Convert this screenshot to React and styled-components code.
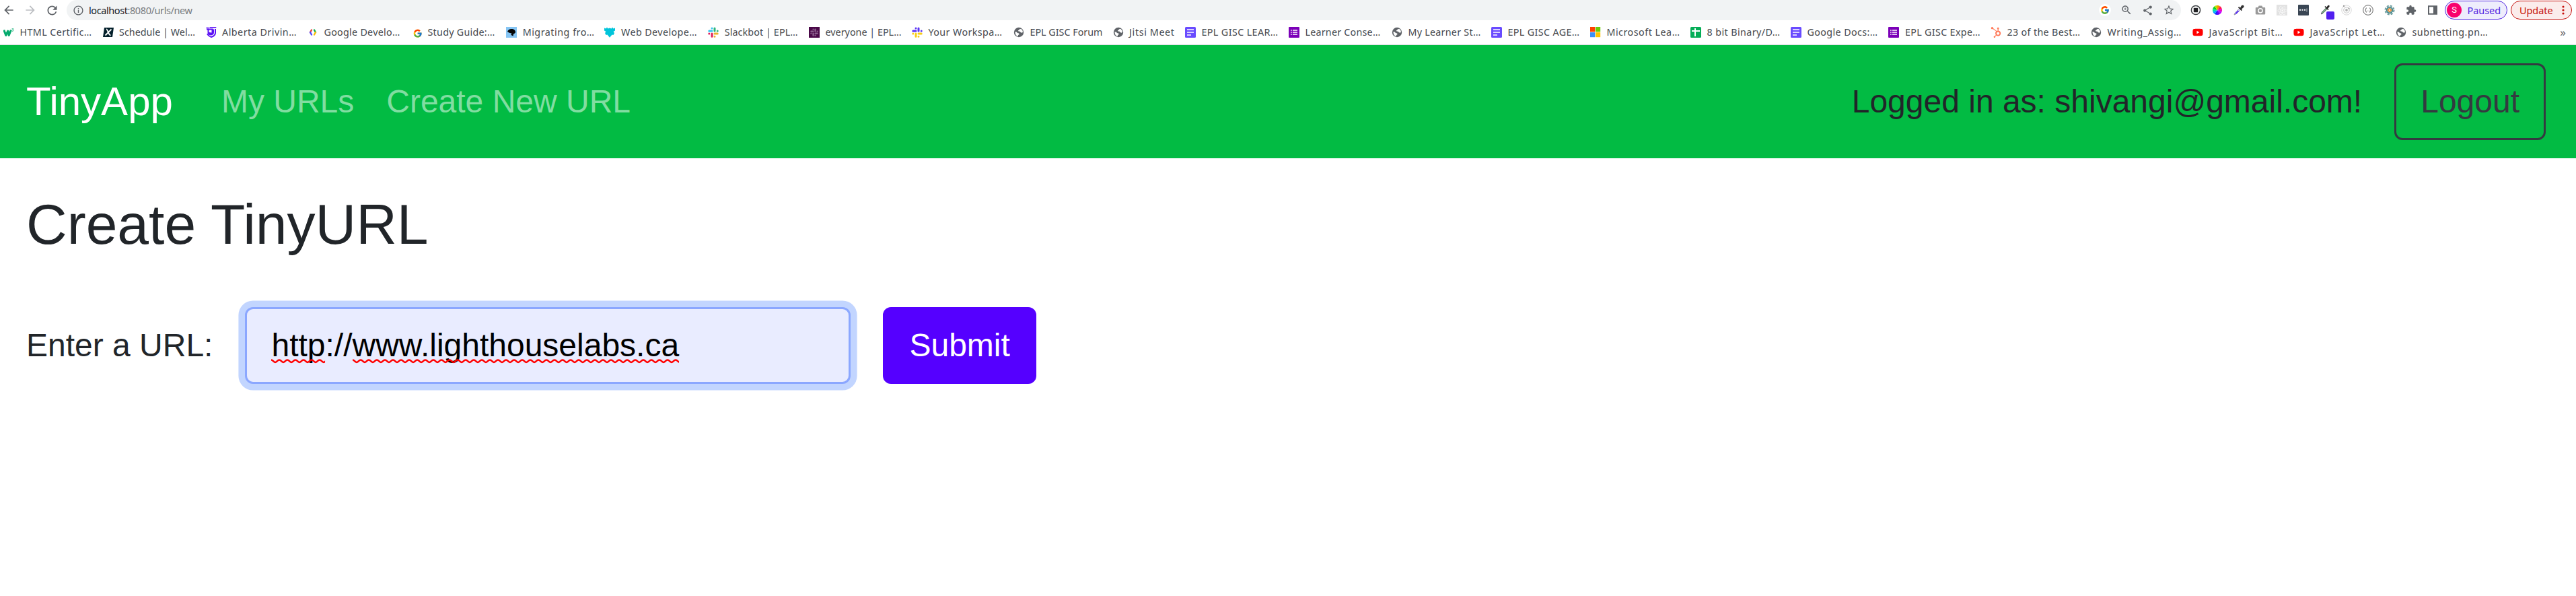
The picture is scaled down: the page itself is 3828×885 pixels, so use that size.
import React, { useLayoutEffect, useRef, useState } from 'react';
import styled, { createGlobalStyle } from 'styled-components';
import {
  MdArrowBack, MdArrowForward, MdRefresh, MdInfoOutline, MdZoomIn, MdShare,
  MdStarBorder, MdExtension,
} from 'react-icons/md';
import { FcGoogle } from 'react-icons/fc';
import { FaReact, FaYoutube, FaHubspot } from 'react-icons/fa';

const GlobalStyle = createGlobalStyle`
  * { box-sizing: border-box; }
  html, body { margin: 0; background: #fff; }
  body {
    font-family: 'Liberation Sans', Arial, sans-serif;
    font-size: 48px;
    line-height: 1.5;
    color: #212529;
    overflow: hidden;
  }
  svg { display: block; flex: none; }
`;

/* ---------- browser chrome ---------- */

const Page = styled.div`
  min-height: 885px;
  background: #fff;
`;

const Toolbar = styled.div`
  display: flex;
  align-items: center;
  height: 30px;
  padding-left: 3px;
  font-family: 'Noto Sans', 'Open Sans', sans-serif;
  font-size: 14.5px;
  line-height: 20px;
`;

const NavButtons = styled.div`
  display: flex;
  gap: 12px;
  width: 96px;
  flex: none;
  color: #5f6368;
`;

const Omnibox = styled.div`
  display: flex;
  align-items: center;
  width: 3142px;
  height: 30px;
  padding: 0 9px 0 9px;
  border-radius: 15px;
  background: #f1f3f4;
  color: #5f6368;
  flex: none;
`;

const Address = styled.div`
  display: flex;
  margin-left: 7px;
  flex: 1;
  color: #777b80;
`;

const OmniActions = styled.div`
  display: flex;
  align-items: center;
  gap: 14px;
`;

const GoogleDisc = styled.span`
  display: grid;
  place-items: center;
  width: 18px;
  height: 18px;
  border-radius: 50%;
  background: #fff;
`;

const Extensions = styled.div`
  display: flex;
  align-items: center;
  gap: 16px;
  margin-left: 14px;
`;

const Pill = styled.div`
  display: flex;
  align-items: center;
  height: 28px;
  width: ${(p) => p.$width}px;
  margin-left: ${(p) => p.$gap}px;
  padding: ${(p) => p.$padding};
  border: 1px solid ${(p) => p.$color};
  border-radius: 14px;
  background: ${(p) => p.$fill};
  color: ${(p) => p.$color};
  flex: none;
`;

const Avatar = styled.span`
  width: 22px;
  height: 22px;
  margin-right: 8.5px;
  border-radius: 50%;
  background: #f9016d;
  color: #fff;
  font: 13px/22px Roboto, sans-serif;
  text-align: center;
`;

const BookmarkBar = styled.div`
  display: flex;
  align-items: center;
  height: 37px;
  padding: 0 15px 0 5px;
  border-bottom: 1px solid #d9d7e0;
  font-family: 'Noto Sans', 'Open Sans', sans-serif;
  font-size: 14.3px;
  line-height: 20px;
  color: #45484d;
`;

const Bookmark = styled.div`
  display: flex;
  align-items: center;
  gap: 8.5px;
  width: ${(p) => p.$width}px;
  height: 36px;
  flex: none;
`;

const Overflow = styled.span`
  margin-left: auto;
  color: #5f6368;
  font-size: 17px;
`;

const Label = styled.span`
  display: inline-block;
  white-space: pre;
  color: ${(p) => p.$color || 'inherit'};
`;

/* Tightens or loosens its letters so that the text fills the given width. */
function FitText({ width, color, children }) {
  const ref = useRef(null);
  const [spacing, setSpacing] = useState(0);
  useLayoutEffect(() => {
    const natural = ref.current.getBoundingClientRect().width;
    setSpacing((width - natural) / children.length);
  }, [width, children]);
  return <Label ref={ref} $color={color} style={{ letterSpacing: spacing }}>{children}</Label>;
}

/* ---------- icons ---------- */

const Svg = ({ size = 16, box = 16, children }) => (
  <svg width={size} height={size} viewBox={`0 0 ${box} ${box}`} fill="none">{children}</svg>
);

const Globe = () => (
  <Svg>
    <circle cx="8" cy="8" r="7.2" fill="#5f6368" />
    <path d="M9 3.2l2.6-.2 2 2.6.3 2.2-1.4.9-1.8-.6-.9-1.4-2.2-.2-.8-1.3 1.6-.6z" fill="#fff" />
    <path d="M2.3 7.2l2.6.4 1 1.3 2.2.5.6 1.5-1.6 1.1-.3 1.8-1.7-.4-2-2.3z" fill="#fff" />
  </Svg>
);

const W3 = () => (
  <Svg>
    <path d="M.8 4.5l3 8 3-6.5 1.4 6.5 3.2-8" stroke="#04aa6d" strokeWidth="3" strokeLinejoin="round" />
    <path d="M12.6 2.8h2.4l-1.3 1.6c1.6 0 1.6 2.4-.9 1.8" stroke="#04aa6d" strokeWidth=".9" />
  </Svg>
);

const XBadge = () => (
  <Svg>
    <path d="M2 1h14l-2 14H0z" fill="#04202b" />
    <path d="M5 3.5c2.5 0 3 9 6.5 9M12.5 3.5L3.5 12.5" stroke="#fff" strokeWidth="1.8" />
  </Svg>
);

const Shield = () => (
  <Svg>
    <path d="M.5 1.5h4M5.5 .8h9.8" stroke="#5b10f5" strokeWidth="1.6" />
    <path d="M1 3.5h8.5v4.5c0 2-4 2-4 0M3.5 3.5v4.5c0 4.5 7.5 4.5 7.5 0v-4.5" stroke="#5b10f5" strokeWidth="2" />
    <path d="M14 3v6c0 3-3 5-6 6-3-1-5-2.5-6-5" stroke="#5b10f5" strokeWidth="2" />
  </Svg>
);

const GoogleDev = () => (
  <Svg>
    <g strokeWidth="2.4" strokeLinecap="round">
      <path d="M6 4.5L4 8" stroke="#ea4335" />
      <path d="M4 8l2 3.5" stroke="#4e4bff" />
      <path d="M10 4.5L12 8" stroke="#0fae55" />
      <path d="M12 8l-2 3.5" stroke="#fbbc04" />
    </g>
  </Svg>
);

const Bird = () => (
  <Svg>
    <path d="M0 0h16v16H0z" fill="#86c5f4" />
    <path d="M2 7c1-3 4-4.5 7-4 3 .3 5 2 5 4.5 0 2-2 2.5-3 3l-.5 3-3-1.5.5-3c-2 .5-4-.5-6-2z" fill="#050505" />
  </Svg>
);

const Frog = () => (
  <Svg>
    <path d="M0 1.5l2.5 1L4 .5l1.5 2L8 1.5l2.5 1 1.5-2 1.5 2 2.5-1v4l-2.5 1.5L15 9l-1.5 3-2-.5L8 15.8 4.500 11.500l-2 .5L1 9l1.500-2L0 5.500z" fill="#00c4da" />
  </Svg>
);

const SlackMark = ({ colors }) => (
  <g strokeWidth="3" strokeLinecap="round">
    <path d="M6 2v.01M1.8 6H6" stroke={colors[0]} />
    <path d="M10 2v4M14.2 6v.01" stroke={colors[1]} />
    <path d="M14.2 10H10M10 14.2v.01" stroke={colors[2]} />
    <path d="M6 14.2V10M1.8 10v.01" stroke={colors[3]} />
  </g>
);

const Slack = () => <Svg><SlackMark colors={['#36c5f0', '#2eb67d', '#ecb22e', '#e01e5a']} /></Svg>;
const SlackDuo = () => <Svg><SlackMark colors={['#5b35f5', '#5b35f5', '#f8cd17', '#f8cd17']} /></Svg>;
const SlackDark = () => (
  <Svg>
    <path d="M0 0h16v16H0z" fill="#4a0848" />
    <g transform="translate(2 2) scale(.75)">
      <SlackMark colors={['#8e6390', '#8e6390', '#8e6390', '#8e6390']} />
    </g>
  </Svg>
);

const Docs = () => (
  <Svg>
    <rect width="16" height="16" rx="1.5" fill="#694bff" />
    <path d="M3 4h10M3 8h10M3 12h6" stroke="#fff" strokeWidth="1.7" />
  </Svg>
);

const Forms = () => (
  <Svg>
    <rect width="16" height="16" rx="1" fill="#7b00b8" />
    <path d="M3 5h1.7M3 8h1.7M3 11h1.7M6 5h7M6 8h7M6 11h7" stroke="#fff" strokeWidth="1.7" />
  </Svg>
);

const Sheets = () => (
  <Svg>
    <rect width="16" height="16" rx="1.5" fill="#05ad57" />
    <path d="M2 6h12M7 2v12" stroke="#fff" strokeWidth="2" />
  </Svg>
);

const Microsoft = () => (
  <Svg>
    <path d="M0 0h7.2v7.2H0z" fill="#ff4100" />
    <path d="M8 0h7.2v7.2H8z" fill="#6bcb05" />
    <path d="M0 8h7.2v7.2H0z" fill="#3b90f7" />
    <path d="M8 8h7.2v7.2H8z" fill="#ffc400" />
  </Svg>
);

const Google = () => <Svg><FcGoogle x="2.5" y="2.5" width="11" height="11" /></Svg>;
const Hubspot = () => <FaHubspot size={16} color="#ff7a59" />;
const Youtube = () => <FaYoutube size={16} color="#f00" />;

const Stop = () => (
  <Svg>
    <circle cx="8" cy="8" r="6.6" stroke="#3c4043" strokeWidth="1.5" />
    <rect x="4.8" y="4.8" width="6.4" height="6.4" rx=".6" fill="#202124" />
  </Svg>
);

const wheel = ['#ff8a00', '#ff1744', '#f000c0', '#c000ff', '#6a00ff', '#2020ff', '#00a8ff', '#00e0a0', '#10d020', '#c0e000'];
const ColorWheel = () => (
  <Svg>
    {wheel.map((c, i) => {
      const a = (i / wheel.length) * Math.PI * 2 - Math.PI / 2;
      const b = ((i + 1) / wheel.length) * Math.PI * 2 - Math.PI / 2;
      const pt = (t) => `${8 + 7 * Math.cos(t)} ${8 + 7 * Math.sin(t)}`;
      return <path key={c} fill={c} d={`M8 8L${pt(a)}A7 7 0 0 1 ${pt(b)}Z`} />;
    })}
  </Svg>
);

const Dropper = () => (
  <Svg>
    <path d="M9 5L2 12.5 1 15l2.5-1L11 7z" fill="#e4dcff" stroke="#8a8a95" strokeWidth=".8" />
    <path d="M7.5 9L3 13.5" stroke="#5a30f5" strokeWidth="2" />
    <path d="M7.5 3.5L12.5 8.5" stroke="#333" strokeWidth="1.8" />
    <path d="M9.5 5.5L11.5 2c1-2 5-1.5 4 1.5L11.5 7z" fill="#333" />
  </Svg>
);

const Camera = () => (
  <Svg>
    <path d="M2 4h2.5l1.2-2.5h4.6L11.5 4H14c.8 0 1.2.5 1.2 1.2v8.1c0 .8-.5 1.2-1.2 1.2H2c-.8 0-1.2-.5-1.2-1.2V5.2C.8 4.5 1.2 4 2 4z" fill="#999" />
    <circle cx="8" cy="8.8" r="3.1" stroke="#fff" strokeWidth="1.5" />
  </Svg>
);

const ReactBadge = () => (
  <Svg>
    <path d="M0 0h16v16H0z" fill="#e2e2e2" />
    <FaReact x="1.5" y="1.5" width="13" height="13" color="#fafafa" />
  </Svg>
);

const Dots = () => (
  <Svg>
    <rect width="16" height="16" rx="1" fill="#3a4654" />
    <path d="M2 7.8h2M5.5 7.8h2M9 7.8h2" stroke="#fff" strokeWidth="2" />
    <path d="M13 5.5v5" stroke="#c8ccd2" strokeWidth=".9" />
  </Svg>
);

const PickerBadge = () => (
  <svg width="16" height="16" viewBox="0 0 16 16" overflow="visible">
    <path d="M9.5 5L3.5 11 2.5 14l2.5-1.5L11 6.5z" fill="#7fc98a" stroke="#334" strokeWidth=".9" />
    <path d="M8 2.5l5 5" stroke="#222" strokeWidth="1.7" />
    <path d="M9.5 5L12 1.5c1-1.5 3.5-.5 2.5 1.5L11.5 6.5z" fill="#222" />
    <rect x="10" y="10" width="12" height="12" rx="2" fill="#511fef" />
  </svg>
);

const Orbit = () => (
  <Svg>
    <circle cx="8" cy="8" r="7.2" stroke="#d2d2d2" strokeWidth=".9" />
    <circle cx="8" cy="8" r="4.2" stroke="#c4c4c4" strokeWidth="1.1" />
    <circle cx="8" cy="8" r="1.9" fill="#b4b4b4" />
    <circle cx="4" cy="2" r="1.2" fill="#9a9a9a" />
    <circle cx="11.5" cy="5.5" r="1.1" fill="#9a9a9a" />
  </Svg>
);

const Braces = () => (
  <Svg>
    <circle cx="8" cy="8" r="7.3" stroke="#505050" strokeWidth=".9" />
    <path d="M5.8 4.8c-1.6 0-.6 2.6-2 3.2 1.4.6.4 3.2 2 3.2M10.2 4.8c1.6 0 .6 2.6 2 3.2-1.4.6-.4 3.2-2 3.2" stroke="#505050" strokeWidth="1" />
    <path d="M6.2 9.2h.9M8.9 9.2h.9" stroke="#505050" strokeWidth="1" />
  </Svg>
);

const Gear = () => (
  <Svg>
    <circle cx="8" cy="8" r="6.5" stroke="#6f9e9f" strokeWidth="2" strokeDasharray="3.1 2" />
    <circle cx="8" cy="8" r="5.3" fill="#46868c" />
    <circle cx="8" cy="8" r="3.5" fill="#8ec9cc" />
    <path d="M8 4.3L11.7 8 8 11.7 4.3 8z" fill="#f08a35" />
    <circle cx="8" cy="8" r="1.3" fill="#f8e2c4" />
  </Svg>
);

const SidePanel = () => (
  <Svg>
    <path d="M2 2.2h12v11.6H2z" stroke="#5f6368" strokeWidth="2" />
    <path d="M9 2h5v12H9z" fill="#5f6368" />
  </Svg>
);

const MenuDots = () => (
  <svg width="4" height="16" viewBox="0 0 4 16" fill="#c5100c">
    <circle cx="2" cy="3" r="1.6" />
    <circle cx="2" cy="8" r="1.6" />
    <circle cx="2" cy="13" r="1.6" />
  </svg>
);

/* icon, title, text width, item width */
const bookmarks = [
  [W3, 'HTML Certific…', 107, 147.5],
  [XBadge, 'Schedule | Wel…', 113, 153],
  [Shield, 'Alberta Drivin…', 111, 151.5],
  [GoogleDev, 'Google Develo…', 113, 154],
  [Google, 'Study Guide:…', 100, 141.2],
  [Bird, 'Migrating fro…', 107, 146.3],
  [Frog, 'Web Develope…', 113, 153.7],
  [Slack, 'Slackbot | EPL…', 109, 149.8],
  [SlackDark, 'everyone | EPL…', 113, 153],
  [SlackDuo, 'Your Workspa…', 110, 151],
  [Globe, 'EPL GISC Forum', 108, 147.6],
  [Globe, 'Jitsi Meet', 67.5, 107.4],
  [Docs, 'EPL GISC LEAR…', 114, 154],
  [Forms, 'Learner Conse…', 112, 153],
  [Globe, 'My Learner St…', 108, 148],
  [Docs, 'EPL GISC AGE…', 107, 147],
  [Microsoft, 'Microsoft Lea…', 109, 149],
  [Sheets, '8 bit Binary/D…', 109, 149],
  [Docs, 'Google Docs:…', 105, 145.5],
  [Forms, 'EPL GISC Expe…', 112, 151.5],
  [Hubspot, '23 of the Best…', 109, 149],
  [Globe, 'Writing_Assig…', 110.5, 151],
  [Youtube, 'JavaScript Bit…', 110, 150],
  [Youtube, 'JavaScript Let…', 112, 152],
  [Globe, 'subnetting.pn…', 113, 150],
];

function Browser() {
  return (
    <>
      <Toolbar>
        <NavButtons>
          <MdArrowBack size={20} />
          <MdArrowForward size={20} color="#bcbec2" />
          <MdRefresh size={21} />
        </NavButtons>
        <Omnibox>
          <MdInfoOutline size={17} />
          <Address>
            <FitText width={57.5} color="#202124">localhost</FitText>
            <FitText width={96}>:8080/urls/new</FitText>
          </Address>
          <OmniActions>
            <GoogleDisc><FcGoogle size={14} /></GoogleDisc>
            <MdZoomIn size={18} />
            <MdShare size={17} />
            <MdStarBorder size={18} />
          </OmniActions>
        </Omnibox>
        <Extensions>
          <Stop />
          <ColorWheel />
          <Dropper />
          <Camera />
          <ReactBadge />
          <Dots />
          <PickerBadge />
          <Orbit />
          <Braces />
          <Gear />
          <MdExtension size={16} color="#5f6368" />
          <SidePanel />
        </Extensions>
        <Pill $width={93} $gap={10} $padding="0 0 0 2px" $color="#5126e0" $fill="#eeedfc">
          <Avatar>S</Avatar>
          <FitText width={49.5}>Paused</FitText>
        </Pill>
        <Pill $width={91} $gap={5} $padding="0 10px 0 12px" $color="#c5100c" $fill="#fbeceb">
          <FitText width={49.5}>Update</FitText>
          <Spacer />
          <MenuDots />
        </Pill>
      </Toolbar>
      <BookmarkBar>
        {bookmarks.map(([Icon, title, text, width], i) => (
          <Bookmark key={i} $width={width}>
            <Icon />
            <FitText width={text}>{title}</FitText>
          </Bookmark>
        ))}
        <Overflow>»</Overflow>
      </BookmarkBar>
    </>
  );
}

/* ---------- the TinyApp page ---------- */

const Spacer = styled.span`
  flex: 1;
`;

const Navbar = styled.header`
  display: flex;
  align-items: center;
  height: 168px;
  padding: 0 45px 0 39px;
  background: #02bb43;
`;

const Brand = styled.a`
  margin-right: 48px;
  font-size: 60px;
  color: #fff;
`;

const NavLink = styled.a`
  padding: 0 24px;
  color: #81dda1;
`;

const Session = styled.div`
  display: flex;
  align-items: center;
  gap: 48px;
  margin-left: auto;
`;

const Button = styled.button`
  height: 114px;
  padding: 0 36px;
  border: 3px solid ${(p) => (p.$outline ? '#343a40' : '#5500ff')};
  border-radius: 12px;
  background: ${(p) => (p.$outline ? 'transparent' : '#5500ff')};
  color: ${(p) => (p.$outline ? '#343a40' : '#fff')};
  font: inherit;
`;

const Main = styled.main`
  padding: 48px 39px;
`;

const Title = styled.h3`
  margin: 0 0 72px;
  font-size: 84px;
  font-weight: 400;
  line-height: 1.2;
`;

const Form = styled.form`
  display: flex;
  align-items: center;
  gap: 48px;
`;

const Field = styled.div`
  display: flex;
  align-items: center;
  width: 900px;
  height: 114px;
  padding: 0 36px;
  border: 3px solid #8ba7ff;
  border-radius: 12px;
  background: #e9ecff;
  box-shadow: 0 0 0 9.6px #c2d5ff;
  color: #000;
`;

const Misspelt = styled.span`
  position: relative;
`;

const Squiggle = styled.svg`
  position: absolute;
  left: 0;
  bottom: 9px;
  width: 100%;
  height: 7px;
`;

function Underlined({ children, id }) {
  return (
    <Misspelt>
      {children}
      <Squiggle>
        <defs>
          <pattern id={id} width="12" height="7" patternUnits="userSpaceOnUse">
            <path d="M-6 4.9C-3 4.9-3 1.5 0 1.5S3 4.9 6 4.9S9 1.5 12 1.5S15 4.9 18 4.9" fill="none" stroke="#f00" strokeWidth="2.5" />
          </pattern>
        </defs>
        <rect width="100%" height="7" fill={`url(#${id})`} />
      </Squiggle>
    </Misspelt>
  );
}

export default function App() {
  return (
    <Page>
      <GlobalStyle />
      <Browser />
      <Navbar>
        <Brand>TinyApp</Brand>
        <NavLink>My URLs</NavLink>
        <NavLink>Create New URL</NavLink>
        <Session>
          <span>Logged in as: shivangi@gmail.com!</span>
          <Button $outline>Logout</Button>
        </Session>
      </Navbar>
      <Main>
        <Title>Create TinyURL</Title>
        <Form>
          <label>Enter a URL:</label>
          <Field>
            <Underlined id="wave-a">http</Underlined>
            <span>://</span>
            <Underlined id="wave-b">www.lighthouselabs.ca</Underlined>
          </Field>
          <Button type="button">Submit</Button>
        </Form>
      </Main>
    </Page>
  );
}
